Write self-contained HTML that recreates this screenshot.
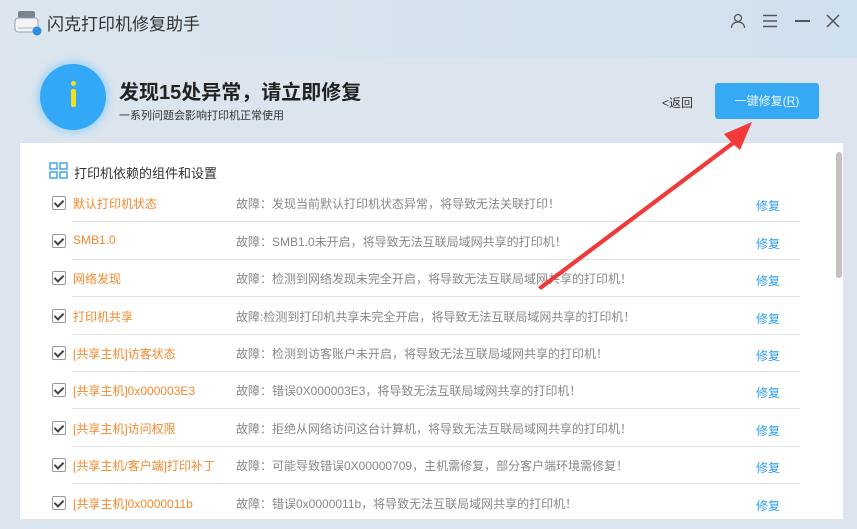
<!DOCTYPE html><html><head><meta charset="utf-8"><style>
*{margin:0;padding:0;box-sizing:border-box}
body{width:857px;height:529px;overflow:hidden;background:#dce5ee;font-family:"Liberation Sans","Noto Sans CJK SC",sans-serif;position:relative}
.tb{position:absolute;left:0;top:0;width:857px;height:58px;background:linear-gradient(90deg,#dde6ef,#cfe0ee)}
.a{position:absolute;white-space:nowrap}
.panel{position:absolute;left:20px;top:143px;width:823px;height:376px;background:#fff}
.row .n{position:absolute;left:73px;font-size:12px;color:#f5892d}
.row .d{position:absolute;left:236px;font-size:12px;color:#888}
.row .f{position:absolute;left:756px;font-size:12px;color:#2d9ef0}
.cb{position:absolute;left:52px;width:14px;height:14px;border:1px solid #999;border-radius:2px;background:#fff}
.cb:after{content:"";position:absolute;left:3px;top:1px;width:4px;height:7px;border:solid #444;border-width:0 2px 2px 0;transform:rotate(45deg)}
.ln{position:absolute;left:72px;width:728px;height:1px;background:#e2e2e2}
</style></head><body>
<div class="tb"></div>
<svg class="a" style="left:14px;top:10px" width="28" height="26" viewBox="0 0 28 26"><rect x="4" y="1" width="17" height="7" rx="2" fill="#7a8590"/><rect x="1" y="8" width="23" height="14" rx="3" fill="#f2f4f6" stroke="#9aa3ac"/><rect x="4" y="17" width="16" height="2" fill="#cfd5da"/><circle cx="23" cy="21" r="4.5" fill="#2d8fe0"/></svg>
<div class="a" style="left:47px;top:10px;font-size:17px;color:#333">闪克打印机修复助手</div>
<svg class="a" style="left:730px;top:13px" width="16" height="16" viewBox="0 0 16 16" fill="none" stroke="#555" stroke-width="1.3"><circle cx="8" cy="5" r="3.5"/><path d="M1.5 15c0-4 3-6 6.5-6s6.5 2 6.5 6"/></svg>
<svg class="a" style="left:762px;top:14px" width="16" height="14" viewBox="0 0 16 14" stroke="#555" stroke-width="1.4"><path d="M1 1.5h14M1 7h14M1 12.5h14"/></svg>
<div class="a" style="left:795px;top:20px;width:15px;height:1.5px;background:#555"></div>
<svg class="a" style="left:826px;top:14px" width="14" height="14" viewBox="0 0 14 14" stroke="#555" stroke-width="1.5"><path d="M1 1l12 12M13 1L1 13"/></svg>
<div class="a" style="left:40px;top:64px;width:66px;height:66px;border-radius:50%;background:#33a8f6;box-shadow:0 0 8px 3px #9fd4f7"></div>
<div class="a" style="left:71px;top:81px;width:5px;height:5px;border-radius:50%;background:#f5e020"></div>
<div class="a" style="left:71px;top:89px;width:5px;height:18px;border-radius:2px;background:#f5e020"></div>
<div class="a" style="left:119px;top:76px;font-size:20px;font-weight:bold;color:#222">发现15处异常，请立即修复</div>
<div class="a" style="left:119px;top:107px;font-size:11px;color:#333">一系列问题会影响打印机正常使用</div>
<div class="a" style="left:662px;top:94px;font-size:12px;color:#333">&lt;返回</div>
<div class="a" style="left:715px;top:83px;width:104px;height:36px;border-radius:3px;background:#36a9f5;color:#e8f5ff;font-size:12px;text-align:center;line-height:36px">一键修复(<u>R</u>)</div>
<div class="panel"></div>
<div class="a" style="left:836px;top:152px;width:6px;height:126px;border-radius:3px;background:#c2c2c2"></div>
<svg class="a" style="left:49px;top:162px" width="20" height="18" viewBox="0 0 20 18" fill="none" stroke="#3aa0e8" stroke-width="1.4"><rect x="1" y="1" width="7" height="6"/><rect x="11" y="1" width="7" height="6"/><rect x="1" y="10" width="7" height="6"/><rect x="11" y="10" width="7" height="6"/></svg>
<div class="a" style="left:74px;top:163px;font-size:13px;color:#333">打印机依赖的组件和设置</div>
<div class="row">
<div class="cb" style="top:196px"></div><div class="a n" style="top:195px">默认打印机状态</div><div class="a d" style="top:195px">故障：发现当前默认打印机状态异常，将导致无法关联打印！</div><div class="a f" style="top:197px">修复</div><div class="ln" style="top:221px"></div>
<div class="cb" style="top:234px"></div><div class="a n" style="top:233px">SMB1.0</div><div class="a d" style="top:233px">故障：SMB1.0未开启，将导致无法互联局域网共享的打印机！</div><div class="a f" style="top:235px">修复</div><div class="ln" style="top:259px"></div>
<div class="cb" style="top:271px"></div><div class="a n" style="top:270px">网络发现</div><div class="a d" style="top:270px">故障：检测到网络发现未完全开启，将导致无法互联局域网共享的打印机！</div><div class="a f" style="top:272px">修复</div><div class="ln" style="top:296px"></div>
<div class="cb" style="top:309px"></div><div class="a n" style="top:308px">打印机共享</div><div class="a d" style="top:308px">故障:检测到打印机共享未完全开启，将导致无法互联局域网共享的打印机！</div><div class="a f" style="top:310px">修复</div><div class="ln" style="top:334px"></div>
<div class="cb" style="top:346px"></div><div class="a n" style="top:345px">[共享主机]访客状态</div><div class="a d" style="top:345px">故障：检测到访客账户未开启，将导致无法互联局域网共享的打印机！</div><div class="a f" style="top:347px">修复</div><div class="ln" style="top:371px"></div>
<div class="cb" style="top:383px"></div><div class="a n" style="top:382px">[共享主机]0x000003E3</div><div class="a d" style="top:382px">故障：错误0X000003E3，将导致无法互联局域网共享的打印机！</div><div class="a f" style="top:384px">修复</div><div class="ln" style="top:408px"></div>
<div class="cb" style="top:421px"></div><div class="a n" style="top:420px">[共享主机]访问权限</div><div class="a d" style="top:420px">故障：拒绝从网络访问这台计算机，将导致无法互联局域网共享的打印机！</div><div class="a f" style="top:422px">修复</div><div class="ln" style="top:446px"></div>
<div class="cb" style="top:458px"></div><div class="a n" style="top:457px">[共享主机/客户端]打印补丁</div><div class="a d" style="top:457px">故障：可能导致错误0X00000709，主机需修复，部分客户端环境需修复！</div><div class="a f" style="top:459px">修复</div><div class="ln" style="top:483px"></div>
<div class="cb" style="top:496px"></div><div class="a n" style="top:495px">[共享主机]0x0000011b</div><div class="a d" style="top:495px">故障：错误0x0000011b，将导致无法互联局域网共享的打印机！</div><div class="a f" style="top:497px">修复</div>
</div>
<svg class="a" style="left:0;top:0" width="857" height="529"><polygon points="538,287 731,142 724,134 752,122 740,150 734,145 541,290" fill="#f03a3a"/></svg>
</body></html>
